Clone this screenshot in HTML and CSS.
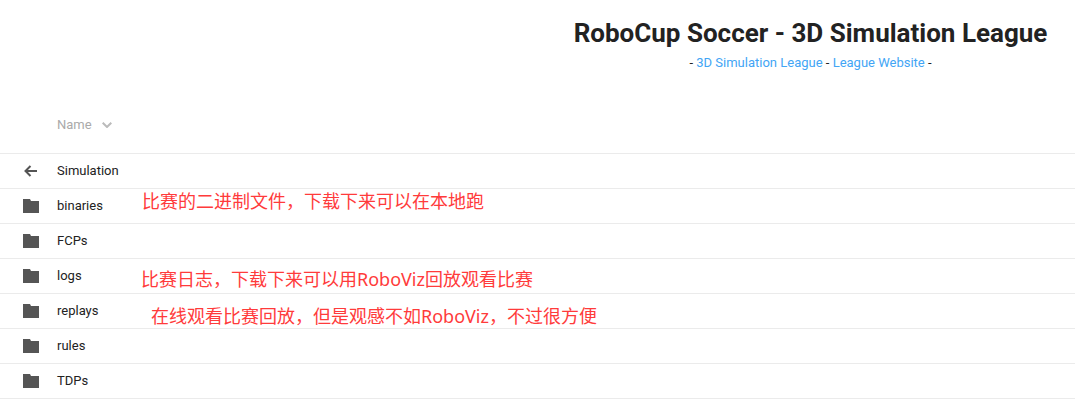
FILE: index.html
```
<!DOCTYPE html>
<html lang="en">
<head>
    <meta charset="UTF-8">
    <title>RoboCup Soccer - 3D Simulation League</title>
    <link rel="stylesheet" href="styles.css">
</head>
<body>
<svg class="symbols">
    <symbol id="folder" viewBox="0 0 16 14">
        <path d="M0 0h7l1 2h8v12H0z"/>
    </symbol>
</svg>
<div class="header">
    <h1>RoboCup Soccer - 3D Simulation League</h1>
    <p>- <a href="#">3D Simulation League</a> - <a href="#">League Website</a> -</p>
</div>
<table class="files">
    <thead>
    <tr>
        <th class="icon"></th>
        <th>
            <button type="button" class="sort">Name
                <svg width="10" height="6" viewBox="0 0 10 6"><path d="M0.7 0.7L5 5l4.3-4.3"/></svg>
            </button>
        </th>
    </tr>
    </thead>
    <tbody>
    <tr>
        <td class="icon"><svg class="back" width="14" height="12" viewBox="0 0 14 12"><path d="M13 6H2M6.5 1L1.5 6l5 5"/></svg></td>
        <td><a href="#">Simulation</a></td>
    </tr>
    <tr>
        <td class="icon"><svg width="16" height="14"><use href="#folder"/></svg></td>
        <td><a href="#">binaries</a><span class="note note-binaries" lang="zh">比赛的二进制文件，下载下来可以在本地跑</span></td>
    </tr>
    <tr>
        <td class="icon"><svg width="16" height="14"><use href="#folder"/></svg></td>
        <td><a href="#">FCPs</a></td>
    </tr>
    <tr>
        <td class="icon"><svg width="16" height="14"><use href="#folder"/></svg></td>
        <td><a href="#">logs</a><span class="note note-logs" lang="zh">比赛日志，下载下来可以用RoboViz回放观看比赛</span></td>
    </tr>
    <tr>
        <td class="icon"><svg width="16" height="14"><use href="#folder"/></svg></td>
        <td><a href="#">replays</a><span class="note note-replays" lang="zh">在线观看比赛回放，但是观感不如RoboViz，不过很方便</span></td>
    </tr>
    <tr>
        <td class="icon"><svg width="16" height="14"><use href="#folder"/></svg></td>
        <td><a href="#">rules</a></td>
    </tr>
    <tr>
        <td class="icon"><svg width="16" height="14"><use href="#folder"/></svg></td>
        <td><a href="#">TDPs</a></td>
    </tr>
    </tbody>
</table>
</body>
</html>
```
FILE: styles.css
```
*{
    margin: 0;
    padding: 0;
    box-sizing: border-box;
}
body{
    font: 13px/20px Roboto, "Liberation Sans", sans-serif;
    color: #222;
    background: #fff;
}
.symbols{
    display: none;
}
a{
    color: inherit;
    text-decoration: none;
}
.header{
    padding: 16px 0 23px 546px;
    text-align: center;
}
.header h1{
    font-size: 26px;
    line-height: 34px;
    font-weight: bold;
    white-space: nowrap;
    margin-bottom: 3px;
}
.header a{
    color: #42a5f5;
}
.files{
    width: 100%;
    border-collapse: separate;
    border-spacing: 0;
}
.files th,
.files td{
    height: 35px;
    border-bottom: 1px solid #ebebeb;
    text-align: left;
    vertical-align: middle;
}
.files th{
    height: 58px;
    font-weight: normal;
}
.files td{
    position: relative;
}
.files .icon{
    width: 57px;
    padding-left: 23px;
}
.icon svg{
    display: block;
    fill: #555;
}
.icon .back{
    margin-left: 1px;
    fill: none;
    stroke: #555;
    stroke-width: 2;
}
.sort{
    display: flex;
    align-items: center;
    gap: 10px;
    border: none;
    background: none;
    font: inherit;
    color: #aaa;
    cursor: pointer;
}
.sort svg{
    fill: none;
    stroke: #bbb;
    stroke-width: 2;
}
/* 红色备注，浮在表格行上面 */
.note{
    position: absolute;
    font: 18px/24px "Noto Sans", "Noto Sans CJK SC", sans-serif;
    color: #ff3b3b;
    white-space: nowrap;
}
.note-binaries{
    left: 85px;
    top: 0;
}
.note-logs{
    left: 84px;
    top: 8px;
}
.note-replays{
    left: 94px;
    top: 10px;
}
```
